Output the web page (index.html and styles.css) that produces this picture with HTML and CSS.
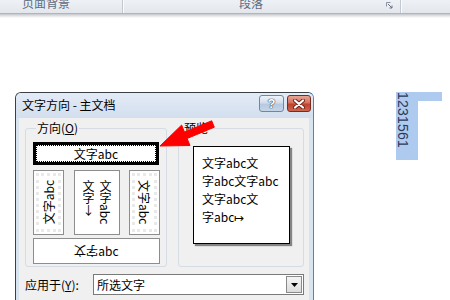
FILE: index.html
```html
<!DOCTYPE html>
<html lang="zh">
<head>
<meta charset="utf-8">
<link rel="stylesheet" href="styles.css">
</head>
<body>
<div class="ribbon">
  <div class="rgroup g1"><span class="rlabel">页面背景</span></div>
  <div class="rgroup g2"><span class="rlabel">段落</span>
    <svg class="launcher" width="7" height="7" viewBox="0 0 7 7"><path d="M0.5 0.5H4.5M0.5 0.5V4.5" stroke="#8a94a3" fill="none"/><path d="M2 2L6 6M6 3.5V6H3.5" stroke="#6a7484" fill="none"/></svg>
  </div>
  <div class="rgroup g3"></div>
</div>
<div class="ribbon-shadow"></div>

<div class="doc">
  <div class="sel">
    <div class="sel-main"><span class="vtext">1231561</span></div>
    <div class="sel-tail"></div>
  </div>
</div>

<div class="dialog">
  <div class="titlebar">
    <span class="title">文字方向 - 主文档</span>
    <div class="tbtns">
      <div class="tbtn help">?</div>
      <div class="tbtn close"><svg width="14" height="10" viewBox="0 0 14 10"><path d="M3 1.5L11 8.5M11 1.5L3 8.5" stroke="#6b2318" stroke-width="4" stroke-linecap="round"/><path d="M3 1.5L11 8.5M11 1.5L3 8.5" stroke="#fff" stroke-width="2.2" stroke-linecap="round"/></svg></div>
    </div>
  </div>
  <div class="client">
    <div class="groups">
      <div class="group left">
        <div class="legend">方向(<u>O</u>)</div>
        <div class="opt selected">文字abc</div>
        <div class="vrow">
          <div class="opt vbtn narrow"><div class="face"><span class="rot-ccw">文字abc</span></div></div>
          <div class="opt vbtn wide"><span class="vert">文字abc<br>文字<span class="up">↓</span></span></div>
          <div class="opt vbtn narrow"><div class="face"><span class="rot-cw">文字abc</span></div></div>
        </div>
        <div class="opt bottom"><span class="flip">文</span><span class="flip">字</span>abc</div>
      </div>
      <div class="group right">
        <div class="legend">预览</div>
        <div class="preview">
          <div>文字abc文</div>
          <div>字abc文字abc</div>
          <div>文字abc文</div>
          <div>字abc↦</div>
        </div>
      </div>
    </div>
    <div class="apply">
      <span class="apply-label">应用于(<u>Y</u>):</span>
      <div class="combo">
        <span class="combo-text">所选文字</span>
        <div class="drop"><svg width="7" height="4" viewBox="0 0 7 4"><path d="M0 0H7L3.5 4Z" fill="#000"/></svg></div>
      </div>
    </div>
  </div>
</div>

<svg class="arrow" width="450" height="300" viewBox="0 0 450 300">
  <polygon points="160,146 190,145.5 187.1,138.5 214.3,127.2 211.7,120.8 184.5,132.1 181.6,125.1" fill="#ff0000" stroke="#ff0000" stroke-width="1" stroke-linejoin="round"/>
</svg>
</body>
</html>
```
FILE: styles.css
```css
* { box-sizing: border-box; }
body {
  margin: 0;
  width: 450px;
  height: 300px;
  overflow: hidden;
  position: relative;
  background: #fff;
  font-family: "Noto Sans CJK SC", "Noto Sans", sans-serif;
  font-size: 12px;
  color: #000;
}

/* ribbon */
.ribbon {
  display: flex;
  height: 14px;
  background: linear-gradient(#eef1f5, #e3e7ec);
  border-bottom: 1px solid #aeb5bf;
  overflow: hidden;
}
.rgroup {
  position: relative;
  height: 13px;
  border-right: 1px solid #c3c9d1;
  box-shadow: 1px 0 0 #fafbfc;
}
.g1 { width: 123px; padding-left: 22px; }
.g2 { width: 278px; padding-left: 116px; display: flex; }
.g3 { flex: 1; border-right: none; box-shadow: none; }
.rlabel {
  display: block;
  margin-top: -3px;
  line-height: 12px;
  color: #5c6b82;
}
.launcher { margin-left: 123px; margin-top: 2px; }
.ribbon-shadow {
  height: 4px;
  background: linear-gradient(#c4c8ce, #e9eaec 60%, #fff);
}

/* document selection */
.doc { padding: 74px 0 0 396px; }
.sel { display: flex; align-items: flex-start; }
.sel-main {
  width: 22px;
  height: 68px;
  background: #aecbef;
  padding-left: 1px;
}
.sel-tail { width: 24px; height: 9px; background: #aecbef; }
.vtext {
  display: block;
  writing-mode: vertical-rl;
  font-family: "Liberation Sans", sans-serif;
  font-size: 14px;
  line-height: 12px;
  color: #2a3a58;
  letter-spacing: 0.2px;
}

/* dialog */
.dialog {
  position: absolute;
  left: 15px;
  top: 92px;
  width: 299px;
  height: 220px;
  border: 1px solid #3b3f46;
  border-right-color: #2f8fdc;
  border-radius: 6px 6px 0 0;
  background: #d9e4f1;
  overflow: hidden;
}
.titlebar {
  height: 25px;
  display: flex;
  align-items: flex-start;
  padding: 0 2px 0 6px;
  background: linear-gradient(#e3ebf6, #d3dfee);
}
.title { line-height: 24px; }
.tbtns { margin-left: auto; margin-top: 2px; display: flex; gap: 3px; }
.tbtn {
  height: 17px;
  border-radius: 3px;
  display: flex;
  align-items: center;
  justify-content: center;
}
.help {
  width: 25px;
  border: 1px solid #73869f;
  background: linear-gradient(#eef3f9, #d2deed 45%, #b7c9e0 55%, #c6d5e8);
  color: #fff;
  font-family: "Liberation Sans", sans-serif;
  font-weight: bold;
  font-size: 13px;
  text-shadow: 0 0 1px #36465e, 0 0 1px #36465e, 0 0 1px #36465e;
}
.close {
  width: 24px;
  border: 1px solid #7b2a1f;
  background: linear-gradient(#e8a596, #d4725e 45%, #c0422d 55%, #cf6550);
}

.client {
  height: 200px;
  margin: 0 4px 0 3px;
  background: #f0f0f0;
  padding: 10px 0 0 6px;
}
.groups { display: flex; gap: 11px; }
.group {
  border: 1px solid #d5dce3;
  border-radius: 3px;
  height: 139px;
}
.group.left {
  width: 142px;
  padding: 0 0 0 7px;
  display: flex;
  flex-direction: column;
}
.group.right { width: 126px; padding-left: 14px; }
.legend {
  align-self: flex-start;
  margin: -8px 0 0 3px;
  padding: 0 1px;
  height: 14px;
  line-height: 14px;
  background: #f0f0f0;
  width: max-content;
}
.group.right .legend { margin-left: -10px; }

.opt {
  background: #fff;
  border: 1px solid #8d8d8d;
  display: flex;
  align-items: center;
  justify-content: center;
  white-space: nowrap;
}
.selected {
  width: 126px;
  height: 23px;
  margin-top: 7px;
  border: 3px solid #000;
  outline: 1px dotted #000;
  outline-offset: -4px;
  line-height: 14px;
}
.vrow {
  display: flex;
  margin-top: 5px;
  width: 127px;
}
.vbtn { height: 65px; }
.narrow { width: 32px; padding: 2px; }
.wide { width: 46px; margin: 0 9px 0 10px; }
.face {
  width: 100%;
  height: 100%;
  border: 3px dotted #e9e9e9;
  display: flex;
  align-items: center;
  justify-content: center;
}
.rot-ccw {
  writing-mode: vertical-rl;
  text-orientation: sideways;
  transform: rotate(180deg);
  line-height: 14px;
}
.rot-cw {
  writing-mode: vertical-rl;
  text-orientation: sideways;
  line-height: 14px;
}
.vert {
  writing-mode: vertical-rl;
  text-orientation: mixed;
  line-height: 17px;
  white-space: nowrap;
}
.up { text-orientation: upright; }
.bottom {
  width: 127px;
  height: 26px;
  margin-top: 3px;
  line-height: 14px;
}
.flip { display: inline-block; transform: rotate(180deg); }

.preview {
  width: 97px;
  height: 98px;
  margin-top: 11px;
  background: #fff;
  border: 1px solid #000;
  box-shadow: 2px 2px 1px rgba(0,0,0,0.45);
  padding: 7px 0 0 8px;
  line-height: 18px;
  white-space: nowrap;
}

.apply {
  display: flex;
  align-items: center;
  margin-top: 7px;
}
.apply-label { width: 68px; line-height: 14px; }
.combo {
  width: 211px;
  height: 21px;
  border: 1px solid #7a7a7a;
  background: #fff;
  display: flex;
  align-items: center;
  padding: 0 1px 0 3px;
}
.combo-text { line-height: 14px; }
.drop {
  margin-left: auto;
  width: 16px;
  height: 17px;
  border: 1px solid #8a8a8a;
  background: linear-gradient(#f4f4f4, #dcdcdc);
  display: flex;
  align-items: center;
  justify-content: center;
}

.arrow {
  position: absolute;
  left: 0;
  top: 0;
  pointer-events: none;
}
```
